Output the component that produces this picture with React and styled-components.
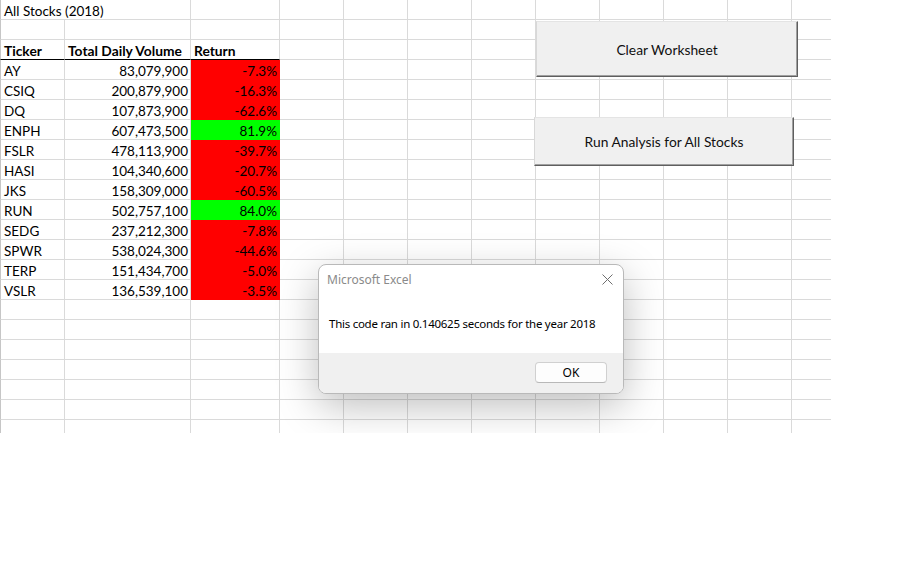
import React from 'react';
import styled, { createGlobalStyle } from 'styled-components';

const GlobalStyle = createGlobalStyle`
  body {
    margin: 0;
    background: #fff;
  }
`;

// Data
const stocks = [
  ['AY', '83,079,900', '-7.3%'],
  ['CSIQ', '200,879,900', '-16.3%'],
  ['DQ', '107,873,900', '-62.6%'],
  ['ENPH', '607,473,500', '81.9%'],
  ['FSLR', '478,113,900', '-39.7%'],
  ['HASI', '104,340,600', '-20.7%'],
  ['JKS', '158,309,000', '-60.5%'],
  ['RUN', '502,757,100', '84.0%'],
  ['SEDG', '237,212,300', '-7.8%'],
  ['SPWR', '538,024,300', '-44.6%'],
  ['TERP', '151,434,700', '-5.0%'],
  ['VSLR', '136,539,100', '-3.5%'],
];

const EXTRA_COLS = 9;
const TOTAL_ROWS = 22;

// Styled components
const Sheet = styled.div`
  position: relative;
  width: 831px;
  height: 433px;
  overflow: hidden;
  font-family: Lato, 'Liberation Sans', sans-serif;
`;

const Grid = styled.div`
  display: grid;
  grid-template-columns: 65px 126px 89px repeat(${EXTRA_COLS}, 64px);
  grid-auto-rows: 20px;
  width: max-content;
`;

const Cell = styled.div`
  box-sizing: border-box;
  grid-column: span ${(p) => p.$span || 1};
  display: flex;
  align-items: center;
  justify-content: ${(p) => (p.$right ? 'flex-end' : 'flex-start')};
  padding: 2px ${(p) => (p.$right ? '2px' : '0')} 0 ${(p) => (p.$right ? '0' : '3px')};
  font-size: ${(p) => (p.$bold ? '13.8px' : '13.5px')};
  font-weight: ${(p) => (p.$bold ? 700 : 400)};
  color: #000;
  white-space: nowrap;
  background: ${(p) => p.$fill || 'transparent'};
  border-right: 1px solid ${(p) => p.$fill || '#dadada'};
  border-bottom: 1px solid ${(p) => (p.$underline ? '#000' : p.$fill || '#dadada')};
  border-left: ${(p) => (p.$first ? '1px solid #c6c6c6' : 'none')};
`;

const ShapeButton = styled.button`
  position: absolute;
  left: ${(p) => p.$x}px;
  top: ${(p) => p.$y}px;
  width: ${(p) => p.$w}px;
  height: ${(p) => p.$h}px;
  box-sizing: border-box;
  background: #f0f0f0;
  border-top: 1px solid #e4e4e4;
  border-left: 1px solid #d8d8d8;
  border-right: 1px solid #5f5f5f;
  border-bottom: 1px solid #5f5f5f;
  box-shadow: inset -1px -1px 0 #a0a0a0;
  font-family: Lato, 'Liberation Sans', sans-serif;
  font-size: 13.8px;
  color: #111;
  padding: 0;
  cursor: pointer;
`;

const Dialog = styled.div`
  position: absolute;
  left: 318px;
  top: 264px;
  width: 306px;
  height: 130px;
  box-sizing: border-box;
  display: flex;
  flex-direction: column;
  background: #fff;
  border: 1px solid #b9b9b9;
  border-radius: 8px;
  overflow: hidden;
  box-shadow: 0 12px 40px rgba(0, 0, 0, 0.26);
  font-family: 'Noto Sans', 'Open Sans', sans-serif;
`;

const DialogHeader = styled.div`
  height: 29px;
  display: flex;
  align-items: center;
  justify-content: space-between;
  padding: 0 10px 0 8px;
`;

const DialogTitle = styled.span`
  font-size: 12px;
  color: #8a8a8a;
`;

const DialogBody = styled.div`
  flex: 1;
  padding: 22px 10px 0;
  font-size: 11.5px;
  letter-spacing: -0.26px;
  color: #000;
`;

const DialogFooter = styled.div`
  height: 40px;
  background: #f0f0f0;
  display: flex;
  align-items: flex-start;
  justify-content: flex-end;
  padding: 9px 16px 0 0;
  box-sizing: border-box;
`;

const OkButton = styled.button`
  width: 72px;
  height: 21px;
  box-sizing: border-box;
  background: #fdfdfd;
  border: 1px solid #d0d0d0;
  border-bottom-color: #b8b8b8;
  border-radius: 4px;
  font-family: 'Noto Sans', 'Open Sans', sans-serif;
  font-size: 12px;
  color: #000;
  padding: 0;
`;

const CloseIcon = () => (
  <svg width="11" height="11" viewBox="0 0 11 11">
    <path d="M0.5 0.5 L10.5 10.5 M10.5 0.5 L0.5 10.5" stroke="#6e6e6e" strokeWidth="1" />
  </svg>
);

const emptyCells = (count, keyPrefix) =>
  Array.from({ length: count }, (_, i) => <Cell key={`${keyPrefix}-${i}`} />);

const App = () => {
  const rows = [];

  // title row: text overflows into column B
  rows.push(
    <Cell key="title" $span={2} $first>
      All Stocks (2018)
    </Cell>
  );
  rows.push(...emptyCells(1 + EXTRA_COLS, 'r0'));

  rows.push(<Cell key="r1-a" $first />);
  rows.push(...emptyCells(2 + EXTRA_COLS, 'r1'));

  // header row
  rows.push(
    <Cell key="h-a" $first $bold $underline>Ticker</Cell>,
    <Cell key="h-b" $bold $underline>Total Daily Volume</Cell>,
    <Cell key="h-c" $bold $underline>Return</Cell>
  );
  rows.push(...emptyCells(EXTRA_COLS, 'h'));

  stocks.forEach(([ticker, volume, ret]) => {
    const fill = ret.startsWith('-') ? '#ff0000' : '#00ff00';
    rows.push(
      <Cell key={`${ticker}-a`} $first>{ticker}</Cell>,
      <Cell key={`${ticker}-b`} $right>{volume}</Cell>,
      <Cell key={`${ticker}-c`} $right $fill={fill}>{ret}</Cell>
    );
    rows.push(...emptyCells(EXTRA_COLS, ticker));
  });

  for (let r = 3 + stocks.length; r < TOTAL_ROWS; r++) {
    rows.push(<Cell key={`e${r}-a`} $first />);
    rows.push(...emptyCells(2 + EXTRA_COLS, `e${r}`));
  }

  return (
    <>
      <GlobalStyle />
      <Sheet>
        <Grid>{rows}</Grid>

        <ShapeButton $x={536} $y={21} $w={262} $h={56}>Clear Worksheet</ShapeButton>
        <ShapeButton $x={534} $y={117} $w={260} $h={49}>Run Analysis for All Stocks</ShapeButton>

        <Dialog>
          <DialogHeader>
            <DialogTitle>Microsoft Excel</DialogTitle>
            <CloseIcon />
          </DialogHeader>
          <DialogBody>This code ran in 0.140625 seconds for the year 2018</DialogBody>
          <DialogFooter>
            <OkButton>OK</OkButton>
          </DialogFooter>
        </Dialog>
      </Sheet>
    </>
  );
};

export default App;
